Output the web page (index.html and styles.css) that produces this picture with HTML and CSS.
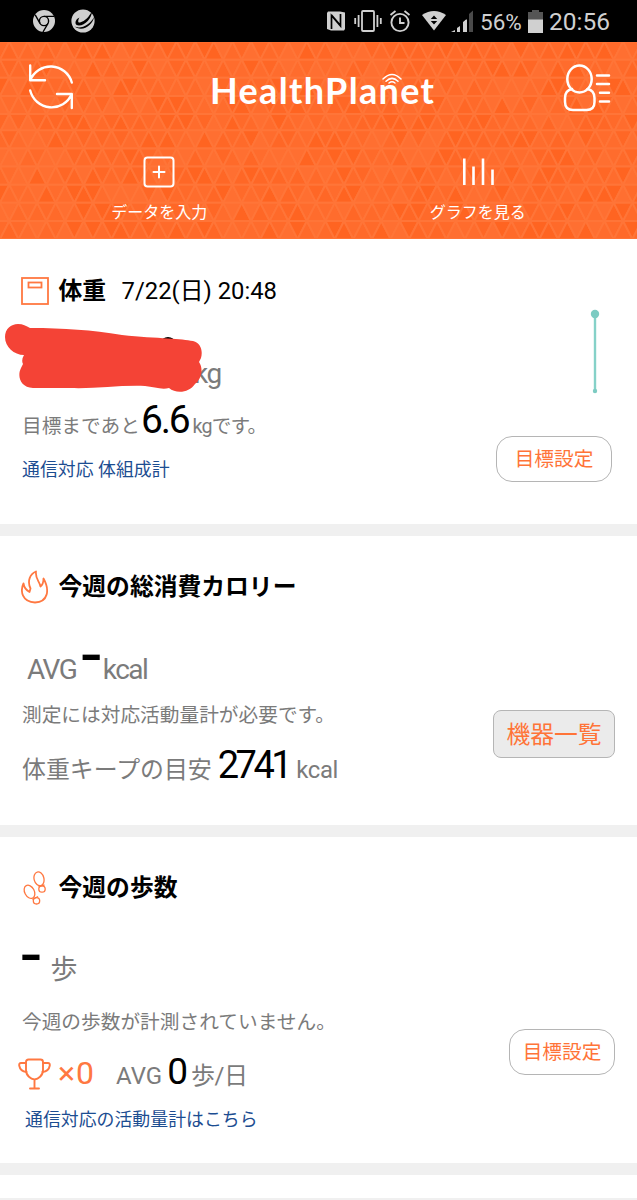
FILE: index.html
```html
<!DOCTYPE html>
<html lang="ja">
<head>
<meta charset="UTF-8">
<title>HealthPlanet</title>
<link rel="stylesheet" href="styles.css">
</head>
<body>

<div class="status-bar">
	<div class="status-left">
		<svg width="22" height="24" viewBox="0 0 22 24">
			<circle cx="11" cy="12" r="11" fill="#d0d0d0"/>
			<g fill="none" stroke="#000" stroke-width="1.4">
				<circle cx="11" cy="12" r="4.6"/>
				<path d="M11 7.400H21M7 14.300L2.200 5.800M15 14.300L10 23"/>
			</g>
		</svg>
		<svg width="24" height="24" viewBox="0 0 24 24">
			<circle cx="12" cy="12" r="11.600" fill="#d0d0d0"/>
			<path d="M21 2C21 9 14 16.500 8 16.500C4 16.500 3.500 13 6 10L8.500 8.500C6.500 12 7 14 9 13.500C14 12 18 8 21 2ZM3 17C9 21 19 16 23 8C22 16 11 24 3 17Z" fill="#000"/>
		</svg>
	</div>
	<div class="status-right">
		<svg width="20" height="20" viewBox="0 0 20 20">
			<path d="M2 .5H14L19 1.500V18L18 19.500H5L1 18V2Z" fill="#d0d0d0"/>
			<path d="M5.500 18V4.500L14.500 15V3M5.500 4L14.500 14.500" fill="none" stroke="#000" stroke-width="1.700"/>
		</svg>
		<svg width="28" height="24" viewBox="0 0 28 24" class="vibrate">
			<g fill="none" stroke="#d0d0d0" stroke-width="1.800">
				<rect x="8" y="2" width="12" height="20" rx="1"/>
				<path d="M4.600 6V18M1.200 9V15M23.400 6V18M26.800 9V15"/>
			</g>
		</svg>
		<svg width="22" height="24" viewBox="0 0 22 24" class="alarm">
			<g fill="none" stroke="#d0d0d0" stroke-width="1.900">
				<circle cx="11" cy="13.500" r="8.600"/>
				<path d="M11 8.500V14H15.500M1.500 6L6.500 2M20.500 6L15.500 2"/>
			</g>
		</svg>
		<svg width="26" height="20" viewBox="0 0 26 20" class="wifi">
			<path d="M1 4Q13 -4 25 4L13 19.500Z" fill="#d0d0d0"/>
			<path d="M9.800 8L13 4.500L16.200 8ZM9.800 10L13 13.500L16.200 10Z" fill="#000"/>
		</svg>
		<svg width="23" height="23" viewBox="0 0 23 23" class="signal">
			<path d="M0 22L4 20V22ZM6 22V18L9 16V22ZM12 22V12L15 9.500V22Z" fill="#d0d0d0"/>
			<path d="M14 11L16 9V22H14Z" fill="#d0d0d0"/>
			<path d="M18 22V4L22 .5V22Z" fill="#4a4a4a"/>
		</svg>
		<span class="percent">56%</span>
		<svg width="15" height="23" viewBox="0 0 15 23" class="battery">
			<path d="M4 0H11V2H15V10H0V2H4Z" fill="#555"/>
			<path d="M0 9.500H15V23H0Z" fill="#d0d0d0"/>
		</svg>
		<span class="clock">20:56</span>
	</div>
</div>

<header class="header">
	<svg id="triangles" class="triangles" width="637" height="197"></svg>
	<div class="title-bar">
		<svg width="46" height="46" viewBox="0 0 46 46" fill="none" stroke="#fff" stroke-width="2.400" stroke-linecap="round" stroke-linejoin="round">
			<path d="M2.200 1.500V16.300H17M2.200 16.300A22 22 0 0 1 43.800 18.500"/>
			<path d="M43.800 44V30H29M43.800 30A22 22 0 0 1 2.200 26.500"/>
		</svg>
		<svg class="logo" width="230" height="50" viewBox="0 0 230 50">
			<text x="3" y="34" textLength="224" lengthAdjust="spacing">HealthPlanet</text>
			<g fill="none" stroke="#fff" stroke-width="1.500" stroke-linecap="round">
				<path d="M176 9Q185 0 194 9M179 11.200Q185 5.500 191 11.200M182 13Q185 10.500 188 13"/>
			</g>
		</svg>
		<svg width="48" height="48" viewBox="0 0 48 48" fill="none" stroke="#fff" stroke-width="2.500" stroke-linecap="round">
			<ellipse cx="16.500" cy="15" rx="12.200" ry="13.400"/>
			<path d="M9 25C4 26 2 29 2 34V38Q2 46 10 46H23.500Q31.500 46 31.500 38V34C31.500 29 29 26 24.500 25"/>
			<path d="M34 11.500H46M34 20H46M37 28.700H46M37 37.500H46"/>
		</svg>
	</div>
	<nav class="menu">
		<a class="menu-item">
			<svg width="32" height="32" viewBox="0 0 32 32" fill="none" stroke="#fff" stroke-width="2" stroke-linecap="round">
				<rect x="1.500" y="1.500" width="29" height="29" rx="3"/>
				<path d="M16 10.500V21.500M10.500 16H21.500"/>
			</svg>
			<span>データを入力</span>
		</a>
		<a class="menu-item">
			<svg width="34" height="32" viewBox="0 0 34 32" fill="none" stroke="#fff" stroke-width="2.600">
				<path d="M3.300 2.500V29M12.500 10.500V29M22 2.500V29M31.500 13.500V29"/>
			</svg>
			<span>グラフを見る</span>
		</a>
	</nav>
</header>

<section class="card card-weight">
	<div class="card-main">
		<h2>
			<svg width="28" height="28" viewBox="0 0 28 28" fill="none" stroke="#ff7841" stroke-width="1.800">
				<rect x="1" y="1" width="26" height="26"/>
				<rect x="7.500" y="5.500" width="13" height="5"/>
			</svg>
			体重 <small>7/22(日) 20:48</small>
		</h2>
		<div class="row value">
			<svg class="marker" width="198" height="70" viewBox="0 0 198 70">
				<ellipse cx="163" cy="19.500" rx="6" ry="4.500" fill="none" stroke="#000" stroke-width="2"/>
				<path d="M13 1C18 1 21 3 25 5C60 5 86 7 117 12C135 14 150 14.500 163 15.500C174 16 182 17 188 18C196 20 198 28 196 35L194 39C199 46 196 57 190 61C184 70 171 71 164 65C157 67 149 64 140 63C115 62 90 66 65 65L28 65C15 64 12 53 16 45L18 41Q16 37 19 32C9 32 0 24 0 14C0 6 6 1 13 1Z" fill="#f44336"/>
			</svg>
			<span class="unit">kg</span>
		</div>
		<div class="row goal"><span>目標まであと</span><b>6.6</b><span><i>kg</i>です。</span></div>
		<a class="link">通信対応 体組成計</a>
	</div>
	<div class="card-side">
		<svg class="trend" width="10" height="86" viewBox="0 0 10 86">
			<path d="M5 5V82" stroke="#85d1c8" stroke-width="2.400"/>
			<circle cx="5" cy="5" r="4.200" fill="#7ccbc2"/>
			<circle cx="5" cy="82" r="2.200" fill="#7ccbc2"/>
		</svg>
		<button class="btn btn-wide">目標設定</button>
	</div>
</section>

<section class="card card-calorie">
	<div class="card-main">
		<h2>
			<svg width="28" height="34" viewBox="0 0 28 34" fill="none" stroke="#ff7841" stroke-width="1.800" stroke-linejoin="round">
				<path d="M2.500 13.500C-1 21 1 32 14 32.500C27 32 29 20 22.500 8.500C22.500 13 21.500 15 19.500 16.500C18.500 11 14 9 15 1.500C9 4 6 11 9.500 18.500L8.500 22C5 20 3 17 2.500 13.500Z"/>
			</svg>
			今週の総消費カロリー
		</h2>
		<div class="row value"><span class="avg">AVG</span><span class="dash">-</span><span class="unit">kcal</span></div>
		<div class="row note">測定には対応活動量計が必要です。</div>
		<div class="row keep"><span>体重キープの目安</span><b>2741</b><span class="small-unit">kcal</span></div>
	</div>
	<div class="card-side">
		<button class="btn btn-gray">機器一覧</button>
	</div>
</section>

<section class="card card-steps">
	<div class="card-main">
		<h2>
			<svg width="28" height="34" viewBox="0 0 28 34" fill="none" stroke="#ff7841" stroke-width="1.300">
				<ellipse cx="18" cy="7.800" rx="4.900" ry="7" transform="rotate(-15 18 7.800)"/>
				<circle cx="21" cy="18" r="3.200"/>
				<path d="M17.500 15.500L23.500 14"/>
				<ellipse cx="8.500" cy="20.800" rx="4.800" ry="7" transform="rotate(-28 8.500 20.800)"/>
				<circle cx="15.500" cy="29.800" r="3.200"/>
				<path d="M11.500 28.500L17 25.500"/>
			</svg>
			今週の歩数
		</h2>
		<div class="row value"><span class="dash">-</span><span class="step">歩</span></div>
		<div class="row note">今週の歩数が計測されていません。</div>
		<div class="row trophy">
			<svg width="33" height="32" viewBox="0 0 33 32" fill="none" stroke="#ff7841" stroke-width="1.900" stroke-linejoin="round" stroke-linecap="round">
				<path d="M8 4Q8 1.500 10.500 1.500H22.500Q25 1.500 25 4V12C25 18 20 21 16.500 21.500C13 21 8 18 8 12ZM16.500 21.500V30.500M12 30.500H21"/>
				<path d="M8 5H3Q1 5 1.200 7.500C2 12 4 13.500 8.500 14M25 5H30Q32 5 31.800 7.500C31 12 29 13.500 24.500 14"/>
			</svg>
			<span class="count"><i>×</i>0</span>
			<span class="avg">AVG</span><b>0</b><span class="per-day">歩/日</span>
		</div>
		<a class="link">通信対応の活動量計はこちら</a>
	</div>
	<div class="card-side">
		<button class="btn">目標設定</button>
	</div>
</section>

<section class="card card-next"></section>

<script src="script.js"></script>
</body>
</html>
```

FILE: styles.css
```css
* {
	box-sizing: border-box;
}

body {
	margin: 0;
	width: 637px;
	height: 1200px;
	overflow: hidden;
	background: #f0f0f0;
	color: #000;
	font-family: Roboto, "Noto Sans CJK JP", sans-serif;
	line-height: 1;
}

svg {
	display: block;
	flex: none;
}

/* status bar */
.status-bar {
	display: flex;
	justify-content: space-between;
	height: 42px;
	padding: 0 28px 0 33px;
	background: #000;
	color: #d0d0d0;
}

.status-left {
	display: flex;
	align-items: center;
	gap: 16px;
}

.status-right {
	display: flex;
	align-items: center;
}

.vibrate { margin-left: 8px; }
.alarm { margin-left: 7px; }
.wifi { margin-left: 10px; }
.signal { margin-left: 4px; }

.percent {
	width: 41px;
	margin-left: 6px;
	font-size: 22.5px;
	padding-top: 3px;
}

.battery { margin-left: 7px; }

.clock {
	width: 60px;
	margin-left: 6px;
	padding-top: 3px;
	font-size: 24.5px;
}

/* header */
.header {
	position: relative;
	height: 197px;
	background: #ff6b2b;
	color: #fff;
}

.triangles {
	position: absolute;
	top: 0;
	left: 0;
}

.title-bar {
	position: relative;
	display: flex;
	justify-content: space-between;
	align-items: flex-start;
	height: 110px;
	padding: 22px 26px 0 28px;
}

.logo {
	margin: 6px 0 0 6px;
	overflow: visible;
}

.logo text {
	fill: #fff;
	font-family: Lato, sans-serif;
	font-weight: bold;
	font-size: 36px;
}

.menu {
	position: relative;
	display: flex;
}

.menu-item {
	display: flex;
	flex-direction: column;
	align-items: center;
	flex: 1;
	padding-top: 4px;
	font-size: 16px;
}

.menu-item span {
	margin-top: 17px;
}

/* cards */
.card {
	display: flex;
	justify-content: space-between;
	margin-bottom: 12px;
	background: #fff;
}

.card-weight { height: 285px; }
.card-calorie { height: 289px; }
.card-steps { height: 326px; }
.card-next { height: 24px; border-bottom: 1px solid #f0f0f0; }

.card-main {
	padding: 34px 0 0 21px;
}

.card-side {
	display: flex;
	flex-direction: column;
	align-items: flex-end;
	padding-right: 22px;
}

.card-weight .card-side {
	padding: 70px 25px 0 0;
}

h2 {
	display: flex;
	align-items: center;
	gap: 9.5px;
	height: 36px;
	margin: 0;
	font-size: 23.8px;
	font-weight: bold;
}

h2 svg {
	margin-top: -2px;
}

h2 small {
	margin-left: 6px;
	font-size: 23.8px;
	font-weight: normal;
}

.card-weight h2 {
	padding-top: 1px;
}

.row {
	display: flex;
	align-items: baseline;
	white-space: nowrap;
	color: #7b7b7b;
}

.row b {
	color: #000;
	font-weight: normal;
}

.row i {
	font-style: normal;
}

.value {
	height: 65px;
	margin-top: 35px;
	font-size: 28px;
	letter-spacing: -1.5px;
}

.card-weight .value {
	position: relative;
	height: 70px;
	margin-top: 14px;
	padding: 37px 0 0 173px;
	align-items: flex-start;
}

.card-calorie .value { padding-left: 6px; }
.card-steps .value { height: 72px; margin-top: 34px; }

/* red pen stroke over the weight */
.marker {
	position: absolute;
	top: 0;
	left: -16px;
	z-index: 1;
}

.dash {
	color: #000;
	font-size: 72px;
	line-height: 28px;
}

.card-calorie .dash {
	margin: 0 3px 0 5px;
}

.step {
	margin-left: 11px;
	font-size: 27px;
}

.goal {
	height: 38px;
	margin: 8px 0 0 1px;
	font-size: 19.7px;
}

.goal b {
	margin: 0 4px 0 1px;
	font-size: 39px;
	letter-spacing: -2.2px;
}

.goal span:last-child {
	letter-spacing: -0.8px;
}

.note {
	margin-left: 1px;
	font-size: 19.7px;
}

.keep {
	font-size: 23.9px;
	margin: 20px 0 0 1px;
}

.keep b {
	margin: 0 7px 0 6px;
	font-size: 38px;
	letter-spacing: -3.5px;
}

.keep .small-unit {
	letter-spacing: -0.3px;
}

.trophy {
	height: 37px;
	margin: 20px 0 0 -3px;
	font-size: 24px;
}

.trophy svg {
	align-self: flex-end;
}

.count {
	margin: 0 22px 0 7px;
	color: #ff7841;
	font-size: 32px;
}

.count i {
	letter-spacing: 1px;
}

.trophy b {
	margin: 0 3px 0 5px;
	font-size: 37px;
}

.per-day {
	letter-spacing: -0.5px;
}

.link {
	display: block;
	margin: 22px 0 0 1px;
	font-size: 17.9px;
	color: #1c4d91;
}

.card-steps .link {
	margin: 21px 0 0 4px;
}

.btn {
	width: 106px;
	height: 46px;
	margin-top: 192px;
	padding: 0 0 2px;
	border: 1px solid #b5b5b5;
	border-radius: 16px;
	background: #fff;
	color: #ff7438;
	font-family: "Noto Sans CJK JP", sans-serif;
	font-size: 19.7px;
	line-height: 38px;
}

.btn-wide {
	width: 116px;
	margin-top: 41px;
}

.btn-gray {
	width: 122px;
	height: 48px;
	margin-top: 174px;
	border-radius: 8px;
	background: #ebebeb;
	font-size: 23.8px;
}

.trend {
	margin-right: 12px;
}
```

FILE: script.js
```js
// draws the triangle texture behind the header

var svg = document.getElementById('triangles');
var colors = ['#ff6f31', '#ff6a2a', '#ff6726', '#ff6421', '#ff6c2d'];
var side = 18.6;
var rowHeight = 18.15;
var seed = 7;
var shapes = '';

function nextColor() {
	seed = (seed * 16807) % 2147483647;
	return colors[Math.floor(seed / 1000) % colors.length];
}

for (var r = 0; r < 12; r++) {
	var top1 = -0.5 + r * rowHeight - (r > 4 ? 2 : 0);
	var bottom = top1 + rowHeight;
	var shift = (r % 2) * side / 2;
	for (var c = -1; c < 36; c++) {
		var x = c * side + shift;
		var up = x + ',' + bottom + ' ' + (x + side) + ',' + bottom + ' ' + (x + side / 2) + ',' + top1;
		var down = (x + side / 2) + ',' + top1 + ' ' + (x + side * 1.5) + ',' + top1 + ' ' + (x + side) + ',' + bottom;
		shapes += '<polygon points="' + up + '" fill="' + nextColor() + '"/>';
		shapes += '<polygon points="' + down + '" fill="' + nextColor() + '"/>';
	}
}
svg.innerHTML = '<g stroke="#ff7538" stroke-width="2">' + shapes + '</g>';
```
